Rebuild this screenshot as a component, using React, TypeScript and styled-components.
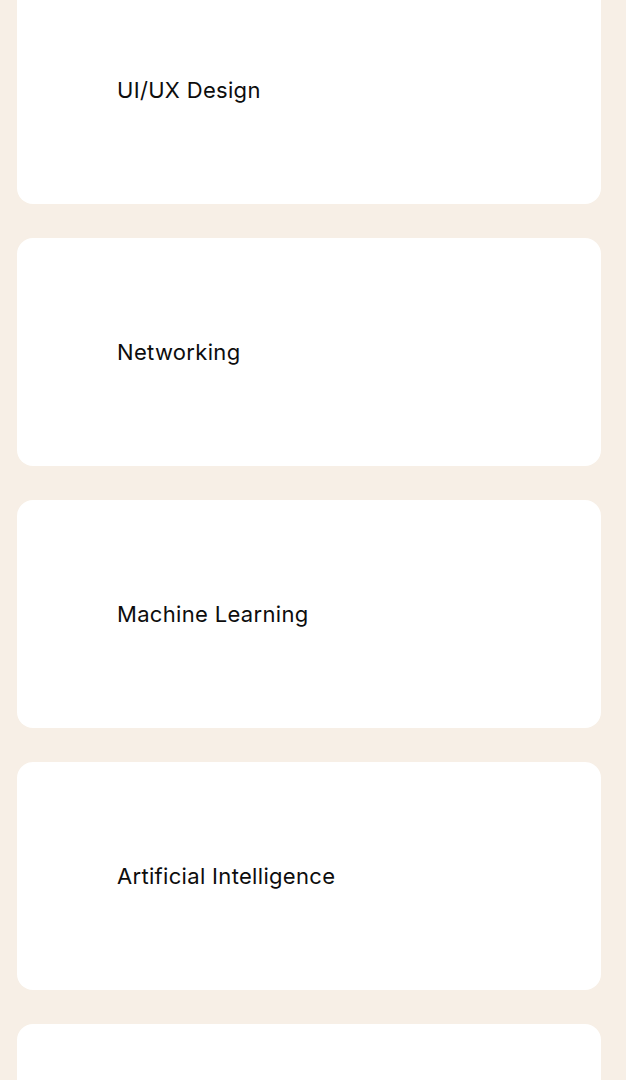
import React from "react";
import styled, { createGlobalStyle } from "styled-components";

const GlobalStyle = createGlobalStyle`
  html, body {
    margin: 0;
    padding: 0;
    background: #f7efe6;
  }
  body {
    font-family: Inter, "Noto Sans", "Liberation Sans", sans-serif;
    -webkit-font-smoothing: antialiased;
  }
`;

const List = styled.div`
  display: flex;
  flex-direction: column;
  gap: 34px;
  margin-top: -24px;
  padding-left: 17px;
  height: 1104px;
  overflow: hidden;
`;

const Card = styled.div`
  flex: none;
  width: 584px;
  height: 228px;
  box-sizing: border-box;
  background: #ffffff;
  border-radius: 16px;
  display: flex;
  align-items: center;
  padding-left: 100px;
`;

const Title = styled.span`
  font-size: 22px;
  font-weight: 400;
  color: #0d0d0d;
  letter-spacing: 0.32px;
`;

const topics: (string | null)[] = [
  "UI/UX Design",
  "Networking",
  "Machine Learning",
  "Artificial Intelligence",
  null,
];

export default function App() {
  return (
    <>
      <GlobalStyle />
      <List>
        {topics.map((t, i) => (
          <Card key={i}>{t && <Title>{t}</Title>}</Card>
        ))}
      </List>
    </>
  );
}
